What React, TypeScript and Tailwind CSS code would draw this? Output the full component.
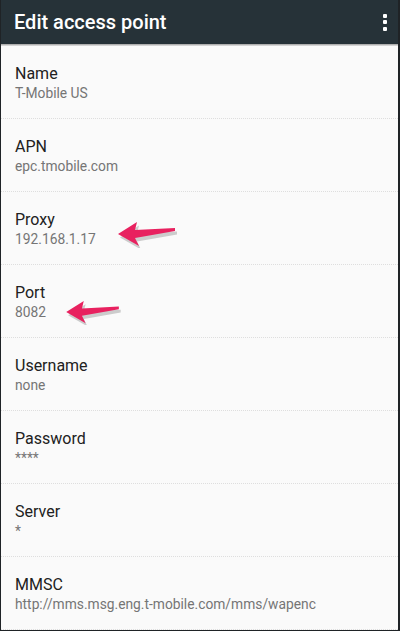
import React from "react";

const fields = [
  { label: "Name", value: "T-Mobile US" },
  { label: "APN", value: "epc.tmobile.com" },
  { label: "Proxy", value: "192.168.1.17" },
  { label: "Port", value: "8082" },
  { label: "Username", value: "none" },
  { label: "Password", value: "****" },
  { label: "Server", value: "*" },
  { label: "MMSC", value: "http://mms.msg.eng.t-mobile.com/mms/wapenc" },
];

function Arrow({ className }: { className: string }) {
  return (
    <svg viewBox="0 0 60 26" className={className}>
      <path d="M2,14 L21,2 L19,10 L59,8 L59,11 L19,18 L23,26 Z" fill="#9e9e9e" opacity="0.5" transform="translate(1,1.5)" />
      <path d="M1,12 L20,0 L18,8 L58,6 L58,9 L18,16 L22,24 Z" fill="#e8215f" />
    </svg>
  );
}

export default function App() {
  return (
    <div className="relative w-[400px] h-[631px] overflow-hidden bg-[#fafafa] border-l border-r-2 border-b border-[#1f2326] font-['Roboto',sans-serif]">
      <header className="h-[44px] bg-[#263238] flex items-center justify-between pl-[13px] pr-[11px]">
        <h1 className="text-white text-[20px] font-medium">Edit access point</h1>
        <div className="flex flex-col gap-[2.5px] items-center">
          <span className="w-[4px] h-[4px] bg-white rounded-[1px]" />
          <span className="w-[4px] h-[4px] bg-white rounded-[1px]" />
          <span className="w-[4px] h-[4px] bg-white rounded-[1px]" />
        </div>
      </header>
      <div className="h-[2px] bg-gradient-to-b from-[#9e9e9e] to-[#e6e6e6]" />
      <ul>
        {fields.map((f) => (
          <li key={f.label} className="h-[73px] pl-[14px] pt-[18px] border-b border-dotted border-[#dedede]">
            <div className="text-[16px] leading-[20px] text-[#212121]">{f.label}</div>
            <div className="text-[13.8px] leading-[18px] text-[#757575]">{f.value}</div>
          </li>
        ))}
      </ul>
      <Arrow className="absolute left-[116px] top-[222px] w-[60px] h-[26px]" />
      <Arrow className="absolute left-[64px] top-[301px] w-[56px] h-[24px]" />
    </div>
  );
}
